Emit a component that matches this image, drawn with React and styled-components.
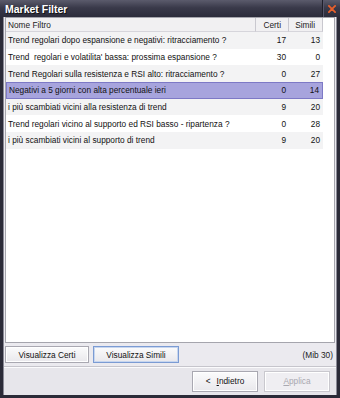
import React, { useState } from 'react';
import styled, { createGlobalStyle } from 'styled-components';

const GlobalStyle = createGlobalStyle`
  html, body {
    margin: 0;
    padding: 0;
    background: #2b2b38;
  }
`

const Window = styled.div`
  width: 340px;
  height: 398px;
  box-sizing: border-box;
  display: flex;
  flex-direction: column;
  background: #2b2b38;
  padding: 0 3px 3px 3px;
  font-family: 'Liberation Sans', Arial, sans-serif;
  font-size: 8.3px;
  color: #111;
`

const TitleBar = styled.div`
  height: 17px;
  margin: 0 -3px;
  padding: 0 0 0 5px;
  display: flex;
  align-items: center;
  background: linear-gradient(#5b5b6c, #3a3a4a 45%, #2c2c3b);
`

const Title = styled.span`
  flex: 1;
  color: #fff;
  font-weight: bold;
  font-size: 10.5px;
  font-family: 'Liberation Sans', Arial, sans-serif;
  text-shadow: 1px 1px 0 #111;
`

const CloseBox = styled.div`
  width: 17px;
  height: 17px;
  display: flex;
  align-items: center;
  justify-content: center;
  border-left: 1px solid #1f1f2a;
  box-shadow: inset 1px 0 0 #55556a;
`

const Body = styled.div`
  flex: 1;
  display: flex;
  flex-direction: column;
  background: #ebeaef;
  border-left: 1px solid #8a8a96;
  border-right: 1px solid #8a8a96;
`

const ListBox = styled.div`
  flex: 1;
  margin: 0 1px;
  background: #fff;
  border: 1px solid #a5a5ad;
  box-shadow: inset 1px 1px 0 #fff;
`

const Grid = styled.div`
  width: 317px;
  display: grid;
  grid-template-columns: 1fr 33px 34px;
`

const HeadCell = styled.div`
  height: 13px;
  display: flex;
  align-items: center;
  justify-content: ${p => (p.$right ? 'flex-end' : 'flex-start')};
  padding: 0 ${p => (p.$right ? '7px' : '2px')} 0 2px;
  background: #f1f0f2;
  border-right: 1px solid #c9c8cf;
  border-bottom: 1px solid #d6d5db;
  color: #222;
`

const Cell = styled.div`
  height: 16.7px;
  box-sizing: border-box;
  display: flex;
  align-items: center;
  justify-content: ${p => (p.$right ? 'flex-end' : 'flex-start')};
  padding: 0 ${p => (p.$right ? '3px' : '2px')} 0 2px;
  white-space: pre;
  background: ${p => (p.$selected ? '#a7a4dd' : p.$odd ? '#f3f3f4' : '#fff')};
  border-top: 1px solid ${p => (p.$selected ? '#7d79c6' : 'transparent')};
  border-bottom: 1px solid ${p => (p.$selected ? '#7d79c6' : 'transparent')};
  ${p => p.$first && p.$selected && 'border-left: 1px solid #7d79c6;'}
  ${p => p.$last && p.$selected && 'border-right: 1px solid #7d79c6;'}
`

const ActionRow = styled.div`
  display: flex;
  align-items: center;
  gap: 4px;
  padding: 3px 3px 3px 1px;
  border-bottom: 1px solid #c6c5cc;
`

const Button = styled.button`
  height: ${p => (p.$tall ? '21px' : '17px')};
  width: ${p => p.$w}px;
  padding: 0;
  font-family: inherit;
  font-size: 8.3px;
  color: ${p => (p.disabled ? '#a9a8b0' : '#111')};
  background: ${p => (p.disabled ? '#efeef2' : 'linear-gradient(#fbfbfc, #e9e8ec)')};
  border: 1px solid ${p => (p.$focus ? '#7b9bd3' : p.disabled ? '#c9c8ce' : '#a9a8b1')};
  box-shadow: ${p => (p.$focus ? 'inset 0 0 0 1px #c7d6ef' : 'inset 0 0 0 1px #fff')};
  display: flex;
  align-items: center;
  justify-content: center;
  gap: 6px;
`

const Note = styled.span`
  margin-left: auto;
  color: #222;
`

const Footer = styled.div`
  height: 26px;
  display: flex;
  align-items: center;
  justify-content: flex-end;
  gap: 6px;
  padding: 0 6px 1px 0;
  border-top: 1px solid #fbfbfd;
  background: #e7e6eb;
`

const rows = [
  ['Trend regolari dopo espansione e negativi: ritracciamento ?', 17, 13],
  ["Trend  regolari e volatilita' bassa: prossima espansione ?", 30, 0],
  ['Trend Regolari sulla resistenza e RSI alto: ritracciamento ?', 0, 27],
  ['Negativi a 5 giorni con alta percentuale ieri', 0, 14],
  ['i più scambiati vicini alla resistenza di trend', 9, 20],
  ['Trend regolari vicino al supporto ed RSI basso - ripartenza ?', 0, 28],
  ['i più scambiati vicini al supporto di trend', 9, 20],
]

export default function App() {
  const [selected, setSelected] = useState(3)

  return (
    <Window>
      <GlobalStyle />
      <TitleBar>
        <Title>Market Filter</Title>
        <CloseBox>
          <svg width="8" height="8" viewBox="0 0 9 9">
            <path d="M1 1 L8 8 M8 1 L1 8" stroke="#e8602c" strokeWidth="2" strokeLinecap="round" />
          </svg>
        </CloseBox>
      </TitleBar>
      <Body>
        <ListBox>
          <Grid>
            <HeadCell>Nome Filtro</HeadCell>
            <HeadCell $right>Certi</HeadCell>
            <HeadCell $right>Simili</HeadCell>
            {rows.map((r, i) => {
              const sel = i === selected
              const odd = i % 2 === 0
              return (
                <React.Fragment key={i}>
                  <Cell $first $selected={sel} $odd={odd} onClick={() => setSelected(i)}>{r[0]}</Cell>
                  <Cell $right $selected={sel} $odd={odd}>{r[1]}</Cell>
                  <Cell $right $last $selected={sel} $odd={odd}>{r[2]}</Cell>
                </React.Fragment>
              )
            })}
          </Grid>
        </ListBox>
        <ActionRow>
          <Button $w={84}>Visualizza Certi</Button>
          <Button $w={86} $focus>Visualizza Simili</Button>
          <Note>(Mib 30)</Note>
        </ActionRow>
        <Footer>
          <Button $w={66} $tall>
            <span>&lt;</span>
            <span><u>I</u>ndietro</span>
          </Button>
          <Button $w={66} $tall disabled><span><u>A</u>pplica</span></Button>
        </Footer>
      </Body>
    </Window>
  );
}
